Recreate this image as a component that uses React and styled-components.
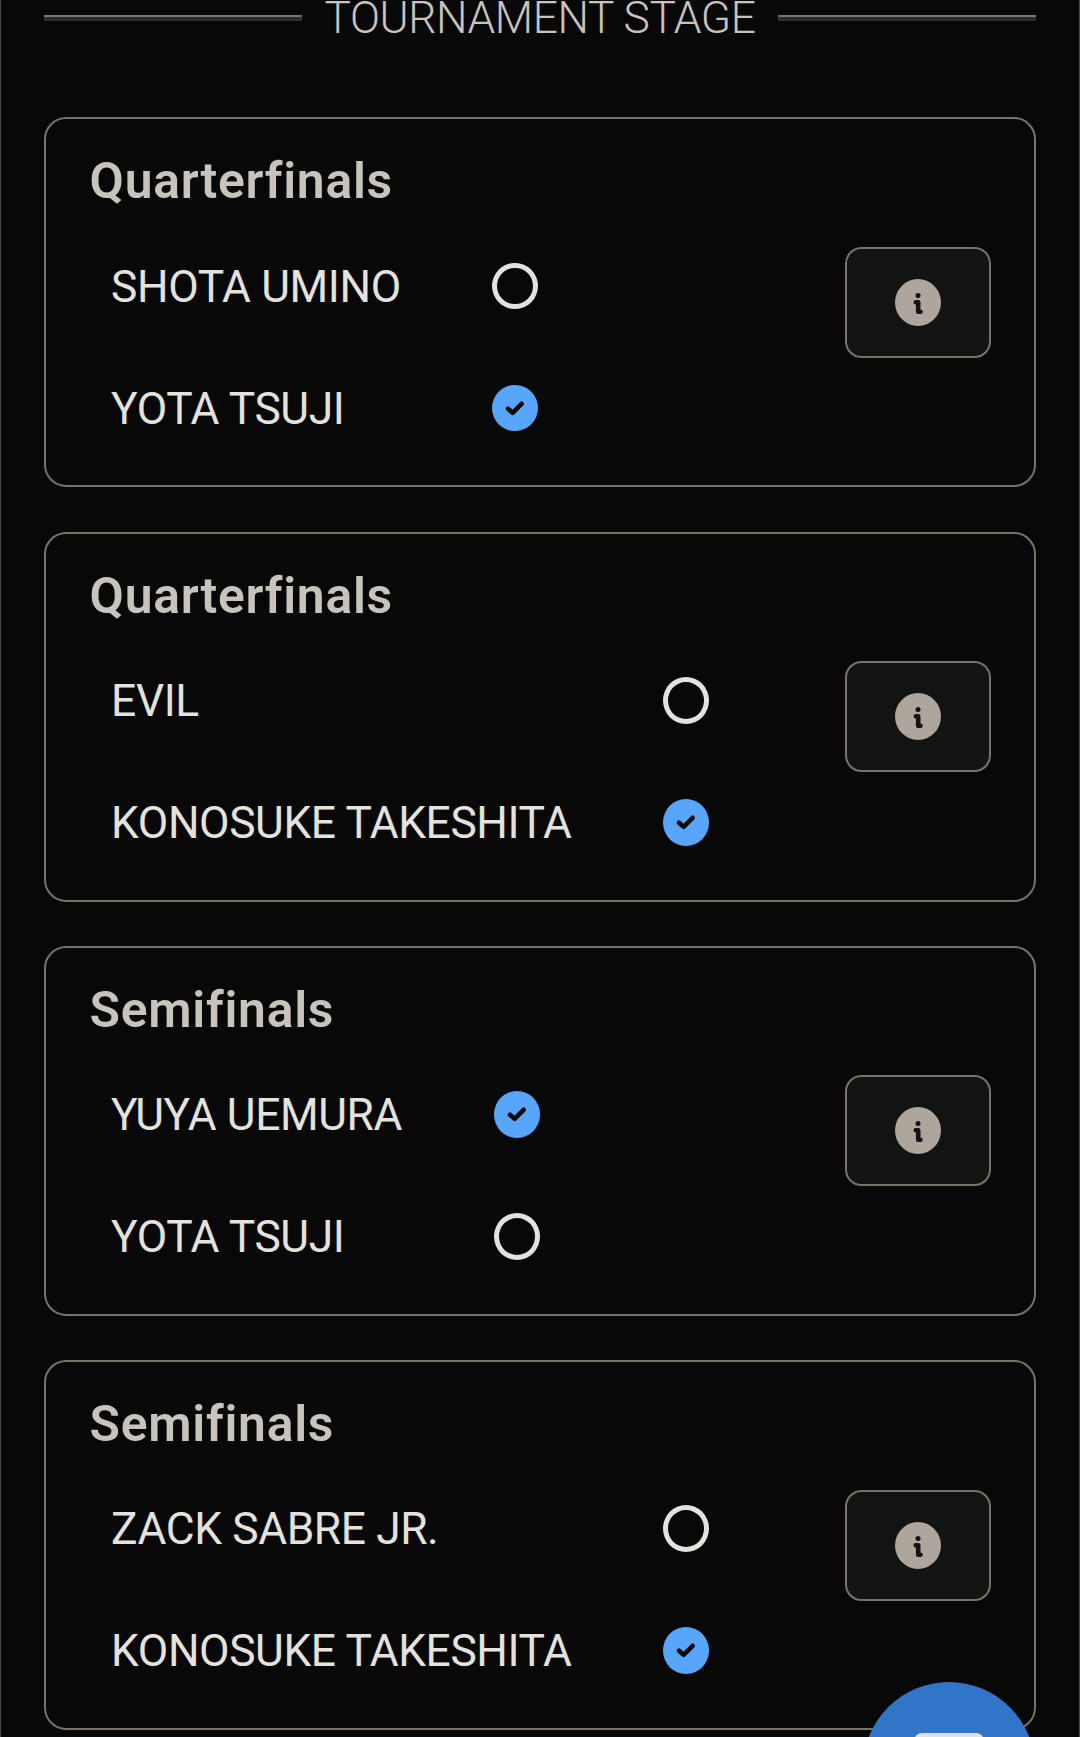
import React from "react";
import styled, { createGlobalStyle } from "styled-components";

const GlobalStyle = createGlobalStyle`
  * { box-sizing: border-box; }
  body {
    margin: 0;
    background: #080808;
    overflow: hidden;
    font-family: Roboto, "Liberation Sans", sans-serif;
  }
`;

const Page = styled.main`
  height: 1737px;
  overflow: hidden;
  padding: 0 43.3px;
  border-left: 1px solid #47484a;
  border-right: 1px solid #47484a;
  background: #080808;
  color: #e4e2dd;
`;

const StageHeader = styled.header`
  display: flex;
  align-items: center;
  gap: 22.6px;
  height: 36px;
`;

const Rule = styled.span`
  flex: 1;
  height: 6px;
  background: #2a2c2e;
  border-top: 2px solid #7c7266;
`;

const StageTitle = styled.h1`
  margin: 0;
  font-size: 44.3px;
  line-height: 36px;
  font-weight: 300;
  letter-spacing: -0.4px;
  color: #c8c3bc;
  white-space: nowrap;
`;

const MatchList = styled.div`
  display: grid;
  gap: 44.2px;
  margin-top: 81.45px;
`;

const Card = styled.section`
  height: 370px;
  padding: 31.9px 42.3px 0;
  border: 2px solid #7a7264;
  border-radius: 22.2px;
`;

const Round = styled.h2`
  margin: 0 0 0 1px;
  font-size: 49.8px;
  line-height: 60px;
  font-weight: 600;
  letter-spacing: 0.75px;
  color: #c8c3bc;
`;

const CardBody = styled.div`
  display: flex;
  justify-content: space-between;
  align-items: flex-start;
  padding-left: 22.5px;
`;

const Picks = styled.div`
  display: grid;
  grid-template-columns: auto 46px;
  grid-auto-rows: 122px;
  column-gap: 91.6px;
  align-items: center;
  margin-top: 13.75px;
`;

const Name = styled.span`
  padding-top: 1px;
  font-size: 44.3px;
  line-height: 52px;
  letter-spacing: -0.39px;
  white-space: nowrap;
`;

const Radio = styled.span`
  display: flex;
  width: 46px;
  height: 46.6px;
  border-radius: 50%;
  border: ${(p) => (p.$on ? "0" : "5px solid #e4e2dd")};
  background: ${(p) => (p.$on ? "#58a6fb" : "transparent")};
`;

const InfoButton = styled.button`
  display: flex;
  align-items: center;
  justify-content: center;
  width: 146px;
  height: 111px;
  margin-top: 35.7px;
  padding: 0;
  border: 2px solid #7a7264;
  border-radius: 16.6px;
  background: #111413;
`;

const ChatButton = styled.button`
  position: fixed;
  left: 863px;
  top: 1681.5px;
  width: 172px;
  height: 172px;
  display: flex;
  justify-content: center;
  padding: 51px 0 0;
  border: 0;
  border-radius: 50%;
  background: #3175c8;
`;

const CheckIcon = () => (
  <svg width="46" height="46.6" viewBox="0 0 46 46.6" fill="none">
    <path d="M16 23.8 L20.6 27.8 L29.6 18.8" stroke="#080808" strokeWidth="4.6" strokeLinecap="round" strokeLinejoin="round" />
  </svg>
);

const InfoIcon = () => (
  <svg width="46" height="47" viewBox="0 0 46 47">
    <ellipse cx="23" cy="23.5" rx="23" ry="23.5" fill="#aea69c" />
    <circle cx="23" cy="16.6" r="2.5" fill="#111413" />
    <path d="M20.8 23.2 H23.2 V32.8 H25.5" fill="none" stroke="#111413" strokeWidth="4.6" strokeLinecap="round" strokeLinejoin="round" />
  </svg>
);

const ChatIcon = () => (
  <svg width="70" height="62" viewBox="0 0 70 62">
    <path d="M9 0 H61 Q70 0 70 9 V40 Q70 48 61 48 H41 L25 61 V48 H9 Q0 48 0 40 V9 Q0 0 9 0Z" fill="#e4e2dd" />
  </svg>
);

const matches = [
  { round: "Quarterfinals", names: ["SHOTA UMINO", "YOTA TSUJI"], pick: 1 },
  { round: "Quarterfinals", names: ["EVIL", "KONOSUKE TAKESHITA"], pick: 1 },
  { round: "Semifinals", names: ["YUYA UEMURA", "YOTA TSUJI"], pick: 0 },
  { round: "Semifinals", names: ["ZACK SABRE JR.", "KONOSUKE TAKESHITA"], pick: 1 },
];

const Match = ({ round, names, pick }) => (
  <Card>
    <Round>{round}</Round>
    <CardBody>
      <Picks role="radiogroup">
        {names.map((name, i) => (
          <React.Fragment key={name}>
            <Name>{name}</Name>
            <Radio $on={i === pick} role="radio" aria-checked={i === pick}>
              {i === pick && <CheckIcon />}
            </Radio>
          </React.Fragment>
        ))}
      </Picks>
      <InfoButton aria-label="Match info">
        <InfoIcon />
      </InfoButton>
    </CardBody>
  </Card>
);

export default function App() {
  return (
    <>
      <GlobalStyle />
      <Page>
        <StageHeader>
          <Rule />
          <StageTitle>TOURNAMENT STAGE</StageTitle>
          <Rule />
        </StageHeader>
        <MatchList>
          {matches.map((m, i) => (
            <Match key={i} {...m} />
          ))}
        </MatchList>
      </Page>
      <ChatButton aria-label="Open chat">
        <ChatIcon />
      </ChatButton>
    </>
  );
}
